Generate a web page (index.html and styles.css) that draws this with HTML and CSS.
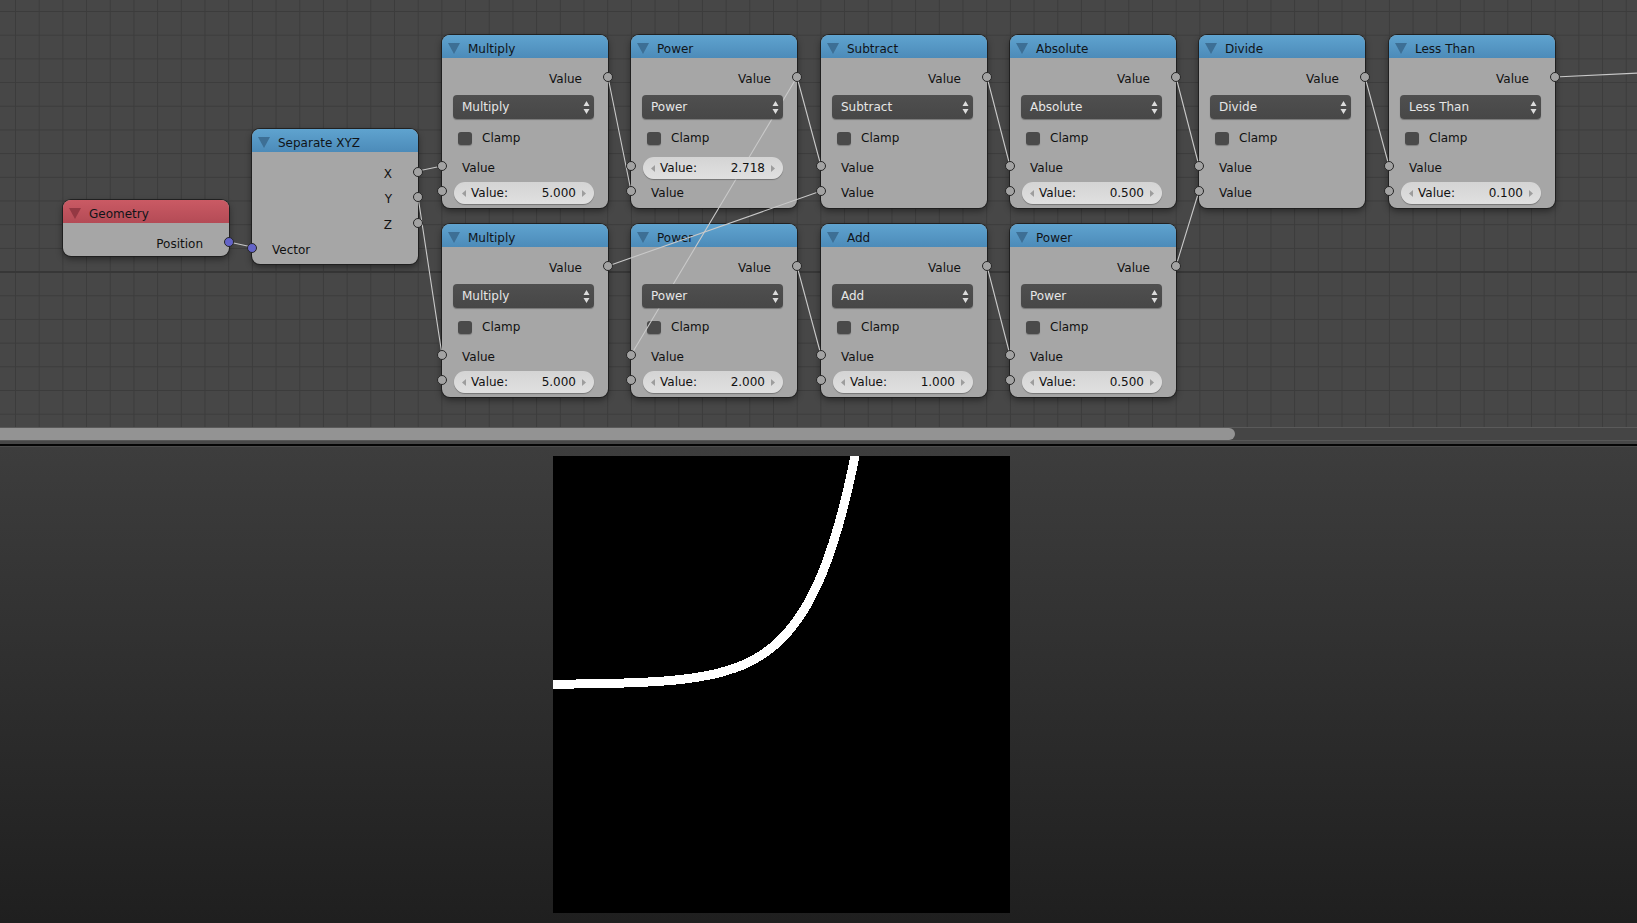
FILE: index.html
```html
<!DOCTYPE html>
<html>
<head>
<meta charset="utf-8">
<title>Node Editor</title>
<link rel="stylesheet" href="styles.css">
</head>
<body>
<div class="app">
  <section class="node-editor">
    <div class="canvas">

      <div class="node geo">
        <div class="head red"><svg class="tri" viewBox="0 0 12 11"><path d="M0 0H12L6 11Z"/></svg><span class="title">Geometry</span></div>
        <div class="body body-geo">
          <div class="row out">Position<i class="sock vec sock-out"></i></div>
        </div>
      </div>

      <div class="node sep">
        <div class="head"><svg class="tri" viewBox="0 0 12 11"><path d="M0 0H12L6 11Z"/></svg><span class="title">Separate XYZ</span></div>
        <div class="body body-sep">
          <div class="row out tall">X<i class="sock sock-out"></i></div>
          <div class="row out tall">Y<i class="sock sock-out"></i></div>
          <div class="row out tall">Z<i class="sock sock-out"></i></div>
          <div class="row in tall"><i class="sock vec sock-in"></i>Vector</div>
        </div>
      </div>

      <!-- Row 1 -->
      <div class="node math c1 r1">
        <div class="head"><svg class="tri" viewBox="0 0 12 11"><path d="M0 0H12L6 11Z"/></svg><span class="title">Multiply</span></div>
        <div class="body">
          <div class="row out">Value<i class="sock sock-out"></i></div>
          <div class="dd"><span>Multiply</span><svg class="ud" viewBox="0 0 7 15"><path d="M0.5 6L3.5 1L6.5 6Z M0.5 9L3.5 14L6.5 9Z"/></svg></div>
          <div class="check"><i class="box"></i>Clamp</div>
          <div class="row in slot1"><i class="sock sock-in"></i>Value</div>
          <div class="row slot2"><i class="sock sock-in"></i><div class="field"><svg class="arr" viewBox="0 0 4 7"><path d="M4 0V7L0 3.5Z"/></svg><span class="lbl">Value:</span><span class="num">5.000</span><svg class="arr" viewBox="0 0 4 7"><path d="M0 0V7L4 3.5Z"/></svg></div></div>
        </div>
      </div>

      <div class="node math c2 r1">
        <div class="head"><svg class="tri" viewBox="0 0 12 11"><path d="M0 0H12L6 11Z"/></svg><span class="title">Power</span></div>
        <div class="body">
          <div class="row out">Value<i class="sock sock-out"></i></div>
          <div class="dd"><span>Power</span><svg class="ud" viewBox="0 0 7 15"><path d="M0.5 6L3.5 1L6.5 6Z M0.5 9L3.5 14L6.5 9Z"/></svg></div>
          <div class="check"><i class="box"></i>Clamp</div>
          <div class="row slot1"><i class="sock sock-in"></i><div class="field"><svg class="arr" viewBox="0 0 4 7"><path d="M4 0V7L0 3.5Z"/></svg><span class="lbl">Value:</span><span class="num">2.718</span><svg class="arr" viewBox="0 0 4 7"><path d="M0 0V7L4 3.5Z"/></svg></div></div>
          <div class="row in slot2"><i class="sock sock-in"></i>Value</div>
        </div>
      </div>

      <div class="node math c3 r1">
        <div class="head"><svg class="tri" viewBox="0 0 12 11"><path d="M0 0H12L6 11Z"/></svg><span class="title">Subtract</span></div>
        <div class="body">
          <div class="row out">Value<i class="sock sock-out"></i></div>
          <div class="dd"><span>Subtract</span><svg class="ud" viewBox="0 0 7 15"><path d="M0.5 6L3.5 1L6.5 6Z M0.5 9L3.5 14L6.5 9Z"/></svg></div>
          <div class="check"><i class="box"></i>Clamp</div>
          <div class="row in slot1"><i class="sock sock-in"></i>Value</div>
          <div class="row in slot2"><i class="sock sock-in"></i>Value</div>
        </div>
      </div>

      <div class="node math c4 r1">
        <div class="head"><svg class="tri" viewBox="0 0 12 11"><path d="M0 0H12L6 11Z"/></svg><span class="title">Absolute</span></div>
        <div class="body">
          <div class="row out">Value<i class="sock sock-out"></i></div>
          <div class="dd"><span>Absolute</span><svg class="ud" viewBox="0 0 7 15"><path d="M0.5 6L3.5 1L6.5 6Z M0.5 9L3.5 14L6.5 9Z"/></svg></div>
          <div class="check"><i class="box"></i>Clamp</div>
          <div class="row in slot1"><i class="sock sock-in"></i>Value</div>
          <div class="row slot2"><i class="sock sock-in"></i><div class="field"><svg class="arr" viewBox="0 0 4 7"><path d="M4 0V7L0 3.5Z"/></svg><span class="lbl">Value:</span><span class="num">0.500</span><svg class="arr" viewBox="0 0 4 7"><path d="M0 0V7L4 3.5Z"/></svg></div></div>
        </div>
      </div>

      <div class="node math c5 r1">
        <div class="head"><svg class="tri" viewBox="0 0 12 11"><path d="M0 0H12L6 11Z"/></svg><span class="title">Divide</span></div>
        <div class="body">
          <div class="row out">Value<i class="sock sock-out"></i></div>
          <div class="dd"><span>Divide</span><svg class="ud" viewBox="0 0 7 15"><path d="M0.5 6L3.5 1L6.5 6Z M0.5 9L3.5 14L6.5 9Z"/></svg></div>
          <div class="check"><i class="box"></i>Clamp</div>
          <div class="row in slot1"><i class="sock sock-in"></i>Value</div>
          <div class="row in slot2"><i class="sock sock-in"></i>Value</div>
        </div>
      </div>

      <div class="node math c6 r1">
        <div class="head"><svg class="tri" viewBox="0 0 12 11"><path d="M0 0H12L6 11Z"/></svg><span class="title">Less Than</span></div>
        <div class="body">
          <div class="row out">Value<i class="sock sock-out"></i></div>
          <div class="dd"><span>Less Than</span><svg class="ud" viewBox="0 0 7 15"><path d="M0.5 6L3.5 1L6.5 6Z M0.5 9L3.5 14L6.5 9Z"/></svg></div>
          <div class="check"><i class="box"></i>Clamp</div>
          <div class="row in slot1"><i class="sock sock-in"></i>Value</div>
          <div class="row slot2"><i class="sock sock-in"></i><div class="field"><svg class="arr" viewBox="0 0 4 7"><path d="M4 0V7L0 3.5Z"/></svg><span class="lbl">Value:</span><span class="num">0.100</span><svg class="arr" viewBox="0 0 4 7"><path d="M0 0V7L4 3.5Z"/></svg></div></div>
        </div>
      </div>

      <!-- Row 2 -->
      <div class="node math c1 r2">
        <div class="head"><svg class="tri" viewBox="0 0 12 11"><path d="M0 0H12L6 11Z"/></svg><span class="title">Multiply</span></div>
        <div class="body">
          <div class="row out">Value<i class="sock sock-out"></i></div>
          <div class="dd"><span>Multiply</span><svg class="ud" viewBox="0 0 7 15"><path d="M0.5 6L3.5 1L6.5 6Z M0.5 9L3.5 14L6.5 9Z"/></svg></div>
          <div class="check"><i class="box"></i>Clamp</div>
          <div class="row in slot1"><i class="sock sock-in"></i>Value</div>
          <div class="row slot2"><i class="sock sock-in"></i><div class="field"><svg class="arr" viewBox="0 0 4 7"><path d="M4 0V7L0 3.5Z"/></svg><span class="lbl">Value:</span><span class="num">5.000</span><svg class="arr" viewBox="0 0 4 7"><path d="M0 0V7L4 3.5Z"/></svg></div></div>
        </div>
      </div>

      <div class="node math c2 r2">
        <div class="head"><svg class="tri" viewBox="0 0 12 11"><path d="M0 0H12L6 11Z"/></svg><span class="title">Power</span></div>
        <div class="body">
          <div class="row out">Value<i class="sock sock-out"></i></div>
          <div class="dd"><span>Power</span><svg class="ud" viewBox="0 0 7 15"><path d="M0.5 6L3.5 1L6.5 6Z M0.5 9L3.5 14L6.5 9Z"/></svg></div>
          <div class="check"><i class="box"></i>Clamp</div>
          <div class="row in slot1"><i class="sock sock-in"></i>Value</div>
          <div class="row slot2"><i class="sock sock-in"></i><div class="field"><svg class="arr" viewBox="0 0 4 7"><path d="M4 0V7L0 3.5Z"/></svg><span class="lbl">Value:</span><span class="num">2.000</span><svg class="arr" viewBox="0 0 4 7"><path d="M0 0V7L4 3.5Z"/></svg></div></div>
        </div>
      </div>

      <div class="node math c3 r2">
        <div class="head"><svg class="tri" viewBox="0 0 12 11"><path d="M0 0H12L6 11Z"/></svg><span class="title">Add</span></div>
        <div class="body">
          <div class="row out">Value<i class="sock sock-out"></i></div>
          <div class="dd"><span>Add</span><svg class="ud" viewBox="0 0 7 15"><path d="M0.5 6L3.5 1L6.5 6Z M0.5 9L3.5 14L6.5 9Z"/></svg></div>
          <div class="check"><i class="box"></i>Clamp</div>
          <div class="row in slot1"><i class="sock sock-in"></i>Value</div>
          <div class="row slot2"><i class="sock sock-in"></i><div class="field"><svg class="arr" viewBox="0 0 4 7"><path d="M4 0V7L0 3.5Z"/></svg><span class="lbl">Value:</span><span class="num">1.000</span><svg class="arr" viewBox="0 0 4 7"><path d="M0 0V7L4 3.5Z"/></svg></div></div>
        </div>
      </div>

      <div class="node math c4 r2">
        <div class="head"><svg class="tri" viewBox="0 0 12 11"><path d="M0 0H12L6 11Z"/></svg><span class="title">Power</span></div>
        <div class="body">
          <div class="row out">Value<i class="sock sock-out"></i></div>
          <div class="dd"><span>Power</span><svg class="ud" viewBox="0 0 7 15"><path d="M0.5 6L3.5 1L6.5 6Z M0.5 9L3.5 14L6.5 9Z"/></svg></div>
          <div class="check"><i class="box"></i>Clamp</div>
          <div class="row in slot1"><i class="sock sock-in"></i>Value</div>
          <div class="row slot2"><i class="sock sock-in"></i><div class="field"><svg class="arr" viewBox="0 0 4 7"><path d="M4 0V7L0 3.5Z"/></svg><span class="lbl">Value:</span><span class="num">0.500</span><svg class="arr" viewBox="0 0 4 7"><path d="M0 0V7L4 3.5Z"/></svg></div></div>
        </div>
      </div>

      <svg class="wires" viewBox="0 0 1637 427" width="1637" height="427">
        <g stroke="#c9c9c9" stroke-width="1.1" fill="none" stroke-linecap="round">
          <line x1="229" y1="242" x2="252" y2="247"/>
          <line x1="418" y1="171" x2="442" y2="166"/>
          <line x1="418" y1="196.5" x2="442" y2="355"/>
          <line x1="608" y1="77" x2="631" y2="191"/>
          <line x1="797" y1="77" x2="821" y2="166"/>
          <line x1="797" y1="77" x2="631" y2="355"/>
          <line x1="608" y1="266" x2="821" y2="191"/>
          <line x1="797" y1="266" x2="821" y2="355"/>
          <line x1="987" y1="77" x2="1010" y2="166"/>
          <line x1="987" y1="266" x2="1010" y2="355"/>
          <line x1="1176" y1="77" x2="1199" y2="166"/>
          <line x1="1176" y1="266" x2="1199" y2="191"/>
          <line x1="1365" y1="77" x2="1389" y2="166"/>
          <line x1="1555" y1="77" x2="1640" y2="73"/>
        </g>
      </svg>
    </div>
    <div class="hscroll">
      <div class="track"><div class="thumb"></div></div>
    </div>
  </section>
  <div class="split"></div>
  <section class="image-editor">
    <div class="render">
      <svg viewBox="0 0 457 457" width="457" height="457">
        <rect width="457" height="457" fill="#000"/>
        <polyline fill="none" stroke="#fff" stroke-width="9" stroke-linejoin="round" shape-rendering="crispEdges"
          points="-6,228.3 0,228.2 22.8,228 45.7,227.7 68.5,227.1 91.4,226.2 114.3,224.8 125.7,223.7 137.1,222.3 148.5,220.5 160,218.3 171.4,215.4 182.8,211.7 188.5,209.5 194.2,206.9 200,204 205.7,200.8 211.4,197.1 217.1,192.9 222.8,188.2 228.5,182.8 234.2,176.7 239.9,169.8 245.6,162 251.4,153.2 257.1,143.2 262.8,131.8 268.5,119 274.2,104.3 279.9,87.6 285.6,69 291.3,47.7 297,23.7 302,0 306.2,-21.7"/>
      </svg>
    </div>
  </section>
</div>
</body>
</html>
```

FILE: styles.css
```css
* { box-sizing: border-box; }
html, body {
  margin: 0;
  padding: 0;
  width: 1637px;
  height: 923px;
  overflow: hidden;
  background: #1e1e1e;
  font-family: "DejaVu Sans", "Liberation Sans", sans-serif;
  font-size: 12px;
}

.app {
  display: flex;
  flex-direction: column;
  width: 1637px;
  height: 923px;
}

/* ---------- Node editor ---------- */
.node-editor {
  display: flex;
  flex-direction: column;
  height: 444px;
}

.canvas {
  position: relative;
  height: 427px;
  overflow: hidden;
  background-color: #474747;
  background-image:
    linear-gradient(to bottom, transparent 271px, #373737 271px, #373737 273px, transparent 273px),
    linear-gradient(to right, #3c3c3c 1px, transparent 1px),
    linear-gradient(to bottom, #3c3c3c 1px, transparent 1px);
  background-size: 100% 100%, 23.7px 23.7px, 23.7px 23.7px;
  background-position: 0 0, 15px 11px, 15px 11px;
}

.wires {
  position: absolute;
  left: 0;
  top: 0;
  z-index: 2;
  pointer-events: none;
}

.hscroll {
  height: 17px;
  border-top: 1px solid #5a5a5a;
  background: #474747;
}
.track {
  display: flex;
  height: 13px;
  border-bottom: 1px solid #575757;
  background: #454545;
}
.thumb {
  width: 1235px;
  height: 12px;
  background: #939393;
  border-radius: 0 6px 6px 0;
}

.split {
  height: 2px;
  background: #050505;
}

/* ---------- Nodes ---------- */
.node {
  position: absolute;
  width: 166px;
  border-radius: 8px;
  background: #a6a6a6;
  color: #111;
  box-shadow: 0 0 0 1px rgba(28, 28, 28, 0.85), 0 3px 7px rgba(0, 0, 0, 0.45);
}

.geo { left: 63px; top: 200px; }
.sep { left: 252px; top: 129px; }
.c1 { left: 442px; }
.c2 { left: 631px; }
.c3 { left: 821px; }
.c4 { left: 1010px; }
.c5 { left: 1199px; }
.c6 { left: 1389px; }
.r1 { top: 35px; }
.r2 { top: 224px; }

.head {
  display: flex;
  align-items: center;
  height: 23px;
  padding: 4px 0 0 6px;
  border-radius: 8px 8px 0 0;
  background: linear-gradient(#5fa3cf, #4c8bb9);
}
.head .tri {
  width: 12px;
  height: 11px;
  fill: #3d6f95;
}
.head .title {
  margin-left: 8px;
  color: #101418;
}
.head.red {
  background: linear-gradient(#ca5a64, #b44b56);
}
.head.red .tri { fill: #943843; }

.body {
  padding: 9px 0 3px;
}
.body-geo { padding: 9px 0 0; }
.body-sep { padding: 9px 0 1px; }

.row {
  position: relative;
  display: flex;
  align-items: center;
  height: 24px;
}
.row.tall { height: 25.5px; }
.row.out {
  justify-content: flex-end;
  padding-right: 26px;
}
.row.in {
  padding-left: 20px;
}
.slot1 { margin-top: 6px; }
.slot2 { margin-top: 1px; }

.sock {
  position: absolute;
  z-index: 3;
  top: calc(50% - 7px);
  width: 10px;
  height: 10px;
  border-radius: 50%;
  background: #a3a3a3;
  border: 1px solid #262626;
}
.sock-in { left: -5px; }
.sock-out { right: -5px; }
.sock.vec { background: #6464c8; }

.dd {
  position: relative;
  z-index: 3;
  display: flex;
  align-items: center;
  justify-content: space-between;
  height: 24px;
  margin: 4px 14px 0 11px;
  padding: 0 4px 0 9px;
  border-radius: 4px;
  background: linear-gradient(#4f4f4f, #474747);
  box-shadow: 0 1px 1px rgba(0, 0, 0, 0.3);
  color: #e6e6e6;
}
.dd .ud {
  width: 7px;
  height: 15px;
  fill: #dcdcdc;
}

.check {
  display: flex;
  align-items: center;
  height: 24px;
  margin-top: 7px;
  padding-left: 16px;
  gap: 10px;
}
.check .box {
  width: 14px;
  height: 13px;
  border-radius: 3px;
  background: #4a4a4a;
  box-shadow: 0 1px 1px rgba(0, 0, 0, 0.25);
}

.field {
  position: relative;
  z-index: 3;
  display: flex;
  align-items: center;
  width: 140px;
  height: 22px;
  margin-left: 12px;
  padding: 0 8px;
  border-radius: 11px;
  background: linear-gradient(#d4d4d4, #e0e0e0);
  box-shadow: 0 1px 1px rgba(0, 0, 0, 0.3);
  color: #111;
}
.field .arr {
  width: 4px;
  height: 7px;
  fill: #9d9d9d;
}
.field .lbl { margin-left: 5px; }
.field .num { margin-left: auto; margin-right: 6px; }

/* ---------- Image editor ---------- */
.image-editor {
  flex: 1;
  border-top: 1px solid #4b4b4b;
  background: linear-gradient(#3d3d3d, #1f1f1f);
  padding: 9px 0 0 553px;
}
.render {
  width: 457px;
  height: 457px;
}
.render svg { display: block; }
```
